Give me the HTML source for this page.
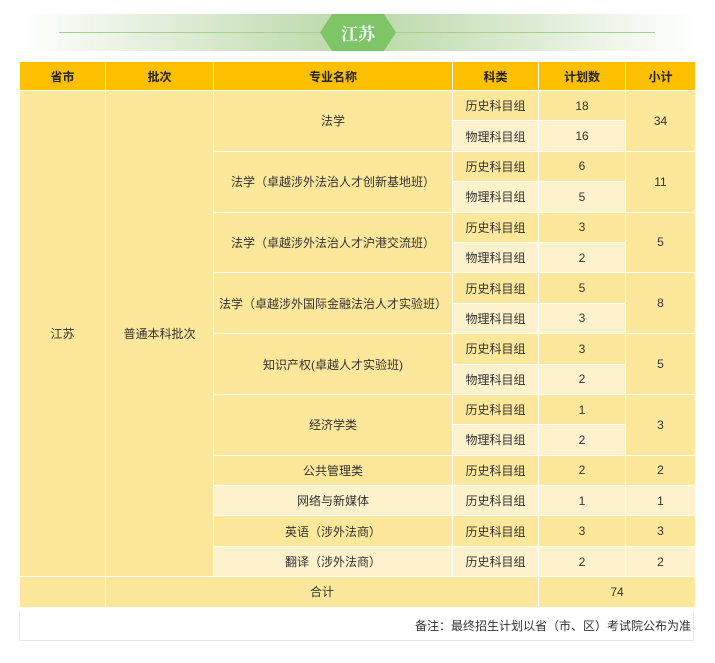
<!DOCTYPE html>
<html><head><meta charset="utf-8">
<style>
html,body{margin:0;padding:0;background:#fff;width:715px;height:663px;overflow:hidden}
body{font-family:"Liberation Sans","Noto Sans CJK SC",sans-serif;color:#333;font-size:12px}
.banner{position:absolute;left:19px;top:14px;width:676px;height:37px;
background:linear-gradient(90deg,rgba(255,255,255,1) 0%,#dcebd3 25%,#c0dcae 45%,#c0dcae 55%,#dcebd3 75%,rgba(255,255,255,1) 100%)}
.banner .line{position:absolute;left:40px;right:40px;top:18px;height:1px;background:#a6d08f}
.hex{position:absolute;left:320px;top:14px;width:76px;height:37px;background:#7dc567;
clip-path:polygon(12px 0,64px 0,76px 50%,64px 100%,12px 100%,0 50%);color:#fff;
font-family:"Noto Serif CJK SC","Liberation Serif",serif;font-weight:bold;font-size:17px;text-align:center;line-height:37px}
table{position:absolute;left:19px;top:62px;border-collapse:collapse;table-layout:fixed;width:676px}
td,th{border:1px solid #fff;text-align:center;padding:0;height:29.4px;font-size:12px}
th{background:#fcc000;color:#222;font-weight:bold;height:28px;border-top:none}
td{background:#fde79a}
tr.l td.s{background:#fef2cc}
.note{position:absolute;left:19px;top:611px;width:675px;height:30px;border:1px solid #e6e6e6;border-top:none;
text-align:right;line-height:30px;font-size:12px;color:#333;box-sizing:border-box;padding-right:2px}
</style></head><body>
<div class="banner"><div class="line"></div></div>
<div class="hex">江苏</div>
<table>
<colgroup><col style="width:86px"><col style="width:108px"><col style="width:239px"><col style="width:86px"><col style="width:87px"><col style="width:70px"></colgroup>
<tr><th>省市</th><th>批次</th><th>专业名称</th><th>科类</th><th>计划数</th><th>小计</th></tr>
<tr><td rowspan="16">江苏</td><td rowspan="16">普通本科批次</td><td rowspan="2">法学</td><td>历史科目组</td><td>18</td><td rowspan="2">34</td></tr>
<tr class="l"><td class="s">物理科目组</td><td class="s">16</td></tr>
<tr><td rowspan="2">法学（卓越涉外法治人才创新基地班）</td><td>历史科目组</td><td>6</td><td rowspan="2">11</td></tr>
<tr class="l"><td class="s">物理科目组</td><td class="s">5</td></tr>
<tr><td rowspan="2">法学（卓越涉外法治人才沪港交流班）</td><td>历史科目组</td><td>3</td><td rowspan="2">5</td></tr>
<tr class="l"><td class="s">物理科目组</td><td class="s">2</td></tr>
<tr><td rowspan="2">法学（卓越涉外国际金融法治人才实验班）</td><td>历史科目组</td><td>5</td><td rowspan="2">8</td></tr>
<tr class="l"><td class="s">物理科目组</td><td class="s">3</td></tr>
<tr><td rowspan="2">知识产权(卓越人才实验班)</td><td>历史科目组</td><td>3</td><td rowspan="2">5</td></tr>
<tr class="l"><td class="s">物理科目组</td><td class="s">2</td></tr>
<tr><td rowspan="2">经济学类</td><td>历史科目组</td><td>1</td><td rowspan="2">3</td></tr>
<tr class="l"><td class="s">物理科目组</td><td class="s">2</td></tr>
<tr><td>公共管理类</td><td>历史科目组</td><td>2</td><td>2</td></tr>
<tr class="l"><td class="s">网络与新媒体</td><td class="s">历史科目组</td><td class="s">1</td><td class="s">1</td></tr>
<tr><td>英语（涉外法商）</td><td>历史科目组</td><td>3</td><td>3</td></tr>
<tr class="l"><td class="s">翻译（涉外法商）</td><td class="s">历史科目组</td><td class="s">2</td><td class="s">2</td></tr>
<tr><td></td><td colspan="3" style="border-right:1px solid #fff">合计</td><td colspan="2">74</td></tr>
</table>
<div class="note">备注：最终招生计划以省（市、区）考试院公布为准</div>
</body></html>
